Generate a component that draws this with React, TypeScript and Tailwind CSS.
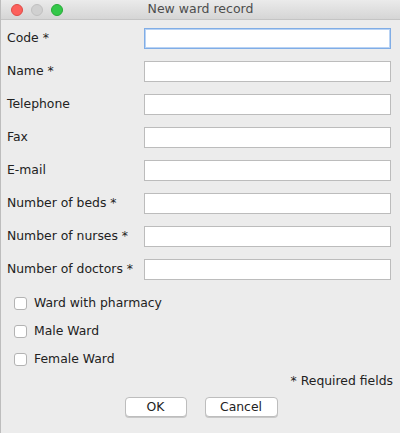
import { useState } from "react";

const fields = [
  { label: "Code *", focused: true },
  { label: "Name *" },
  { label: "Telephone" },
  { label: "Fax" },
  { label: "E-mail" },
  { label: "Number of beds *" },
  { label: "Number of nurses *" },
  { label: "Number of doctors *" },
];

const checks = ["Ward with pharmacy", "Male Ward", "Female Ward"];

function TrafficLight({ color, border }: { color: string; border: string }) {
  return (
    <span
      className={`block w-[12px] h-[12px] rounded-full border ${color} ${border}`}
    />
  );
}

export default function App() {
  const [checked, setChecked] = useState<boolean[]>([false, false, false]);

  return (
    <div
      className="w-[400px] h-[433px] flex flex-col bg-[#ececec] text-[12.4px] text-[#222] border-l border-[#bdbdbd] overflow-hidden"
      style={{ fontFamily: '"DejaVu Sans", "Liberation Sans", sans-serif' }}
    >
      {/* title bar */}
      <div className="relative h-[20px] shrink-0 flex items-center border-b border-[#c4c4c4] bg-gradient-to-b from-[#ebebeb] to-[#d5d5d5]">
        <div className="flex items-center gap-[8px] pl-[10px]">
          <TrafficLight color="bg-[#fc605c]" border="border-[#de4a45]" />
          <TrafficLight color="bg-[#d0d0d0]" border="border-[#c0c0c0]" />
          <TrafficLight color="bg-[#34c84a]" border="border-[#27aa37]" />
        </div>
        <div className="absolute inset-0 flex items-center justify-center text-[12.5px] text-[#4d4d4d]">
          New ward record
        </div>
      </div>

      {/* form */}
      <div className="flex flex-col gap-[12px] pt-[8px] pl-[6px] pr-[9px]">
        {fields.map((f) => (
          <div key={f.label} className="flex items-center h-[21px]">
            <label className="w-[137px] shrink-0 whitespace-nowrap">{f.label}</label>
            <input
              type="text"
              className={
                f.focused
                  ? "flex-1 h-[21px] bg-white border border-[#80ade6] shadow-[inset_0_0_0_1px_#b9d3f4] outline-none px-1"
                  : "flex-1 h-[21px] bg-white border border-[#bcbcbc] outline-none px-1"
              }
            />
          </div>
        ))}
      </div>

      <div className="flex flex-col mt-[9px] pl-[13px]">
        {checks.map((c, i) => (
          <label key={c} className="flex items-center h-[28px] gap-[7px] cursor-default">
            <span
              onClick={() =>
                setChecked((prev) => prev.map((v, j) => (j === i ? !v : v)))
              }
              className="w-[13px] h-[13px] rounded-[3px] bg-white border border-[#b3b3b3] flex items-center justify-center text-[10px] leading-none"
            >
              {checked[i] ? "✓" : ""}
            </span>
            <span>{c}</span>
          </label>
        ))}
      </div>

      <div className="flex justify-end pr-[7px] h-[16px] items-center">
        * Required fields
      </div>

      <div className="flex justify-center gap-[18px] mt-[8px] pl-[1px]">
        <button className="w-[62px] h-[20px] bg-white border border-[#bdbdbd] rounded-[4px] shadow-[0_1px_0_#c8c8c8] leading-none">
          OK
        </button>
        <button className="w-[73px] h-[20px] bg-white border border-[#bdbdbd] rounded-[4px] shadow-[0_1px_0_#c8c8c8] leading-none">
          Cancel
        </button>
      </div>
    </div>
  );
}
